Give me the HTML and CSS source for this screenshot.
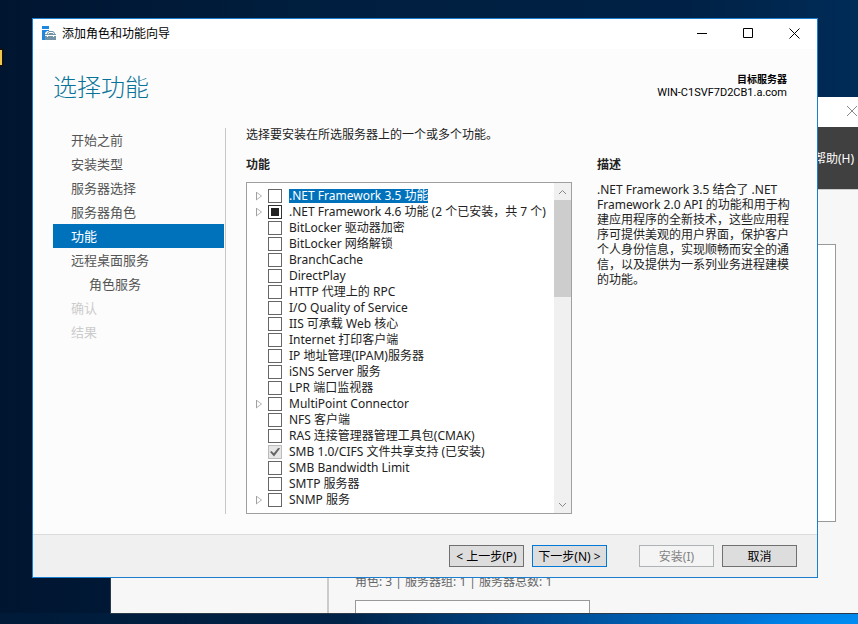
FILE: index.html
```html
<!DOCTYPE html>
<html lang="zh-CN">
<head>
    <meta charset="UTF-8">
    <meta name="viewport" content="width=device-width, initial-scale=1.0">
    <title>添加角色和功能向导</title>
    <link rel="stylesheet" href="styles.css">
</head>
<body>
    <div class="desktop">
        <div class="desktop-icon"></div>

        <!-- Server manager window behind the wizard -->
        <div class="manager">
            <div class="manager-titlebar">
                <svg width="12" height="12" viewBox="0 0 12 12" stroke="#888" fill="none"><path d="M1 1l10 10M11 1L1 11"/></svg>
            </div>
            <div class="manager-menu"><a href="#">帮助(H)</a></div>
            <div class="manager-body">
                <div class="manager-side"></div>
                <div class="manager-main">
                    <div class="manager-panel"></div>
                    <p>角色: 3 | 服务器组: 1 | 服务器总数: 1</p>
                    <div class="manager-tile"></div>
                </div>
            </div>
        </div>

        <!-- Wizard -->
        <div class="wizard">
            <div class="titlebar">
                <svg class="app-icon" width="14" height="14" viewBox="0 0 14 14">
                    <path fill="#1e88e0" d="M0 0h7v3H0zM0 4h7v1H5L3 7v7H0z"/>
                    <path fill="#7392a5" d="M3 8h2V7l2-2h4l2 2v1h1v6H3z"/>
                    <path fill="none" stroke="#fff" d="M6 8l1-1.500h4L12 8M3 9.500h11"/>
                    <path fill="#fff" d="M5 9h1v2H5zM11 9h1v2h-1z"/>
                </svg>
                <span class="titlebar-text">添加角色和功能向导</span>
                <button class="caption-btn" aria-label="最小化"><svg width="11" height="11" viewBox="0 0 11 11"><path d="M0 5.500h10"/></svg></button>
                <button class="caption-btn" aria-label="最大化"><svg width="11" height="11" viewBox="0 0 11 11"><path d="M.5.5h9v9h-9z"/></svg></button>
                <button class="caption-btn" aria-label="关闭"><svg width="11" height="11" viewBox="0 0 11 11"><path d="M.5.5l10 10M10.500.5l-10 10"/></svg></button>
            </div>

            <div class="header">
                <h1>选择功能</h1>
                <div class="target">
                    <strong>目标服务器</strong>
                    <span>WIN-C1SVF7D2CB1.a.com</span>
                </div>
            </div>

            <div class="content">
                <nav class="steps">
                    <a href="#">开始之前</a>
                    <a href="#">安装类型</a>
                    <a href="#">服务器选择</a>
                    <a href="#">服务器角色</a>
                    <a href="#" class="active">功能</a>
                    <a href="#">远程桌面服务</a>
                    <a href="#" class="sub">角色服务</a>
                    <a class="disabled">确认</a>
                    <a class="disabled">结果</a>
                </nav>

                <div class="main">
                    <p class="intro">选择要安装在所选服务器上的一个或多个功能。</p>
                    <div class="columns">
                        <div class="features">
                            <h2>功能</h2>
                            <div class="listbox">
                                <ul class="tree">
                                    <li class="parent selected"><input type="checkbox" id="f1"><label for="f1">.NET Framework 3.5 功能</label></li>
                                    <li class="parent"><input type="checkbox" id="f2" class="partial"><label for="f2">.NET Framework 4.6 功能 (2 个已安装，共 7 个)</label></li>
                                    <li><input type="checkbox" id="f3"><label for="f3">BitLocker 驱动器加密</label></li>
                                    <li><input type="checkbox" id="f4"><label for="f4">BitLocker 网络解锁</label></li>
                                    <li><input type="checkbox" id="f5"><label for="f5">BranchCache</label></li>
                                    <li><input type="checkbox" id="f6"><label for="f6">DirectPlay</label></li>
                                    <li><input type="checkbox" id="f7"><label for="f7">HTTP 代理上的 RPC</label></li>
                                    <li><input type="checkbox" id="f8"><label for="f8">I/O Quality of Service</label></li>
                                    <li><input type="checkbox" id="f9"><label for="f9">IIS 可承载 Web 核心</label></li>
                                    <li><input type="checkbox" id="f10"><label for="f10">Internet 打印客户端</label></li>
                                    <li><input type="checkbox" id="f11"><label for="f11">IP 地址管理(IPAM)服务器</label></li>
                                    <li><input type="checkbox" id="f12"><label for="f12">iSNS Server 服务</label></li>
                                    <li><input type="checkbox" id="f13"><label for="f13">LPR 端口监视器</label></li>
                                    <li class="parent"><input type="checkbox" id="f14"><label for="f14">MultiPoint Connector</label></li>
                                    <li><input type="checkbox" id="f15"><label for="f15">NFS 客户端</label></li>
                                    <li><input type="checkbox" id="f16"><label for="f16">RAS 连接管理器管理工具包(CMAK)</label></li>
                                    <li><input type="checkbox" id="f17" checked disabled><label for="f17">SMB 1.0/CIFS 文件共享支持 (已安装)</label></li>
                                    <li><input type="checkbox" id="f18"><label for="f18">SMB Bandwidth Limit</label></li>
                                    <li><input type="checkbox" id="f19"><label for="f19">SMTP 服务器</label></li>
                                    <li class="parent"><input type="checkbox" id="f20"><label for="f20">SNMP 服务</label></li>
                                </ul>
                                <div class="scrollbar">
                                    <button aria-label="向上滚动"><svg width="9" height="6" viewBox="0 0 9 6"><path d="M1 5l3.500-3.500L8 5"/></svg></button>
                                    <div class="thumb"></div>
                                    <button aria-label="向下滚动"><svg width="9" height="6" viewBox="0 0 9 6"><path d="M1 1l3.500 3.500L8 1"/></svg></button>
                                </div>
                            </div>
                        </div>
                        <div class="description">
                            <h2>描述</h2>
                            <p>.NET Framework 3.5 结合了 .NET Framework 2.0 API 的功能和用于构建应用程序的全新技术，这些应用程序可提供美观的用户界面，保护客户个人身份信息，实现顺畅而安全的通信，以及提供为一系列业务进程建模的功能。</p>
                        </div>
                    </div>
                </div>
            </div>

            <div class="footer">
                <button class="btn">&lt; 上一步(P)</button>
                <button class="btn default">下一步(N) &gt;</button>
                <button class="btn install" disabled>安装(I)</button>
                <button class="btn">取消</button>
            </div>
        </div>
    </div>

    <script>
        // Some sub-features are already installed
        document.getElementById('f2').indeterminate = true;
    </script>
</body>
</html>
```
FILE: styles.css
```css
* {
    box-sizing: border-box;
}

body {
    margin: 0;
    font-family: "Noto Sans", "Noto Sans CJK SC", sans-serif;
    font-size: 12px;
    color: #222;
}

h1, h2, p, ul {
    margin: 0;
    padding: 0;
}

a {
    color: inherit;
    text-decoration: none;
}

button {
    font: inherit;
    padding: 0;
}

.desktop {
    position: relative;
    min-height: 100vh;
    overflow: hidden;
    background:
        linear-gradient(172deg, transparent 60%, rgba(0, 150, 255, 0.5)) right bottom / 280px 11px no-repeat,
        linear-gradient(90deg, #001a38 0%, #002348 40%, #00478a 62%, #0078dc 90%, #0084e8 100%) left bottom / 100% 11px no-repeat,
        linear-gradient(90deg, #001530 0%, #001f40 40%, #002145 80%, #002c58 100%);
}

.desktop-icon {
    position: absolute;
    left: -12px;
    top: 48px;
    width: 16px;
    height: 19px;
    background: #f0c850;
    border: 2px solid #111;
    border-radius: 2px;
}

/* Background window */
.manager {
    position: absolute;
    top: 97px;
    right: 0;
    bottom: 10px;
    left: 110px;
    display: flex;
    flex-direction: column;
    overflow: hidden;
    background: #f7f7f7;
    border: solid #2a3a48;
    border-width: 0 0 1px 1px;
}

.manager-titlebar {
    flex: none;
    display: flex;
    align-items: center;
    justify-content: flex-end;
    height: 30px;
    padding-bottom: 2px;
    background: #fff;
}

.manager-menu {
    flex: none;
    display: flex;
    align-items: center;
    justify-content: flex-end;
    height: 62px;
    padding-right: 4px;
    background: #404040;
    color: #fff;
}

.manager-body {
    flex: 1;
    display: flex;
    border-top: 1px solid #ccc;
}

.manager-side {
    width: 218px;
    border-right: 2px solid #ccc;
}

.manager-main {
    flex: 1;
    padding: 54px 22px 0 26px;
}

.manager-main p {
    margin: 52px 0 10px;
    font-size: 12px;
    line-height: 16px;
    color: #666;
}

.manager-panel {
    height: 278px;
    background: #fff;
    border: 1px solid #999;
}

.manager-tile {
    width: 235px;
    height: 60px;
    background: #fcfcfc;
    border: 1px solid #999;
}

/* Wizard window */
.wizard {
    position: absolute;
    top: 18px;
    right: 40px;
    left: 32px;
    background: #fcfcfc;
    border: 1px solid #1a7fd0;
}

.titlebar {
    display: flex;
    align-items: center;
    height: 30px;
    padding: 0 0 2px 9px;
    background: #fff;
    color: #000;
}

.titlebar-text {
    flex: 1;
    margin-left: 6px;
}

.caption-btn {
    display: flex;
    align-items: center;
    justify-content: center;
    width: 46px;
    height: 28px;
    background: none;
    border: none;
}

.caption-btn svg {
    fill: none;
    stroke: #000;
}

.header {
    display: flex;
    justify-content: space-between;
    align-items: center;
    height: 79px;
    padding: 0 30px 4px 20px;
}

.header h1 {
    font-size: 24px;
    font-weight: 300;
    line-height: 32px;
    color: #087299;
}

.target {
    display: flex;
    flex-direction: column;
    align-items: flex-end;
    padding-bottom: 2px;
    font-family: Roboto, "Noto Sans CJK SC", sans-serif;
    font-size: 11px;
    line-height: 13px;
    color: #000;
}

.target strong {
    font-size: 10px;
}

.content {
    display: flex;
    gap: 20px;
    padding: 0 20px 20px;
}

.steps {
    flex: none;
    width: 173px;
    padding-right: 1px;
    border-right: 1px solid #c8c8c8;
    font-size: 13px;
    line-height: 24px;
    color: #555;
}

.steps a {
    display: block;
    padding-left: 18px;
}

.steps .active {
    background: #0072bc;
    color: #fff;
}

.steps .sub {
    padding-left: 36px;
}

.steps .disabled {
    color: #ccc;
}

.main {
    flex: 1;
    min-width: 0;
}

.intro {
    line-height: 14px;
}

.columns {
    display: flex;
    gap: 25px;
    margin-top: 15px;
}

.features {
    flex: 1;
    min-width: 0;
}

h2 {
    margin-bottom: 9px;
    font-size: 12px;
    line-height: 16px;
}

.listbox {
    display: flex;
    border: 1px solid #a0a0a0;
    background: #fff;
}

.tree {
    flex: 1;
    min-width: 0;
    padding: 5px 0 5px 21px;
    list-style: none;
}

.tree li {
    position: relative;
    display: flex;
    align-items: center;
    gap: 7px;
    height: 16px;
    line-height: 14px;
    white-space: nowrap;
}

/* Expander arrow */
.parent::before {
    content: "";
    position: absolute;
    left: -12px;
    width: 6px;
    height: 9px;
    clip-path: polygon(0 0, 100% 50%, 0 100%);
    background: #a0a0a0;
}

.parent::after {
    content: "";
    position: absolute;
    left: -11px;
    width: 4px;
    height: 6px;
    clip-path: polygon(0 0, 100% 50%, 0 100%);
    background: #fff;
}

.tree input {
    appearance: none;
    flex: none;
    width: 14px;
    height: 14px;
    margin: 0;
    border: 1px solid #666;
    background: #fff;
}

.tree input.partial {
    border-color: #333;
    padding: 2px;
    background: #222 content-box;
}

.tree input:disabled {
    display: grid;
    place-items: center;
    border-color: #bbb;
    background: #e6e6e6;
}

.tree input:checked::before {
    content: "";
    width: 10px;
    height: 9px;
    background: #666;
    clip-path: polygon(0 50%, 15% 38%, 38% 65%, 85% 0, 100% 12%, 40% 100%);
}

.selected label {
    background: #0072bc;
    color: #fff;
}

.scrollbar {
    flex: none;
    display: flex;
    flex-direction: column;
    width: 17px;
    background: #f0f0f0;
}

.scrollbar button {
    display: flex;
    align-items: center;
    justify-content: center;
    height: 17px;
    background: none;
    border: none;
}

.scrollbar button:last-child {
    margin-top: auto;
}

.scrollbar svg {
    fill: none;
    stroke: #888;
}

.thumb {
    height: 97px;
    background: #cdcdcd;
}

.description {
    flex: none;
    width: 200px;
}

.description p {
    line-height: 15px;
}

.footer {
    display: flex;
    justify-content: flex-end;
    gap: 8px;
    padding: 10px 20px;
    background: #f0f0f0;
    border-top: 1px solid #dadada;
}

.btn {
    width: 75px;
    height: 22px;
    padding-top: 1px;
    background: #ddd;
    border: 1px solid #707070;
    line-height: 19px;
    color: #000;
    white-space: nowrap;
}

.btn.default {
    border-color: #0078d7;
}

.btn.install {
    margin-left: 24px;
}

.btn:disabled {
    background: #f4f4f4;
    border-color: #adb2b5;
    color: #838383;
}
```
